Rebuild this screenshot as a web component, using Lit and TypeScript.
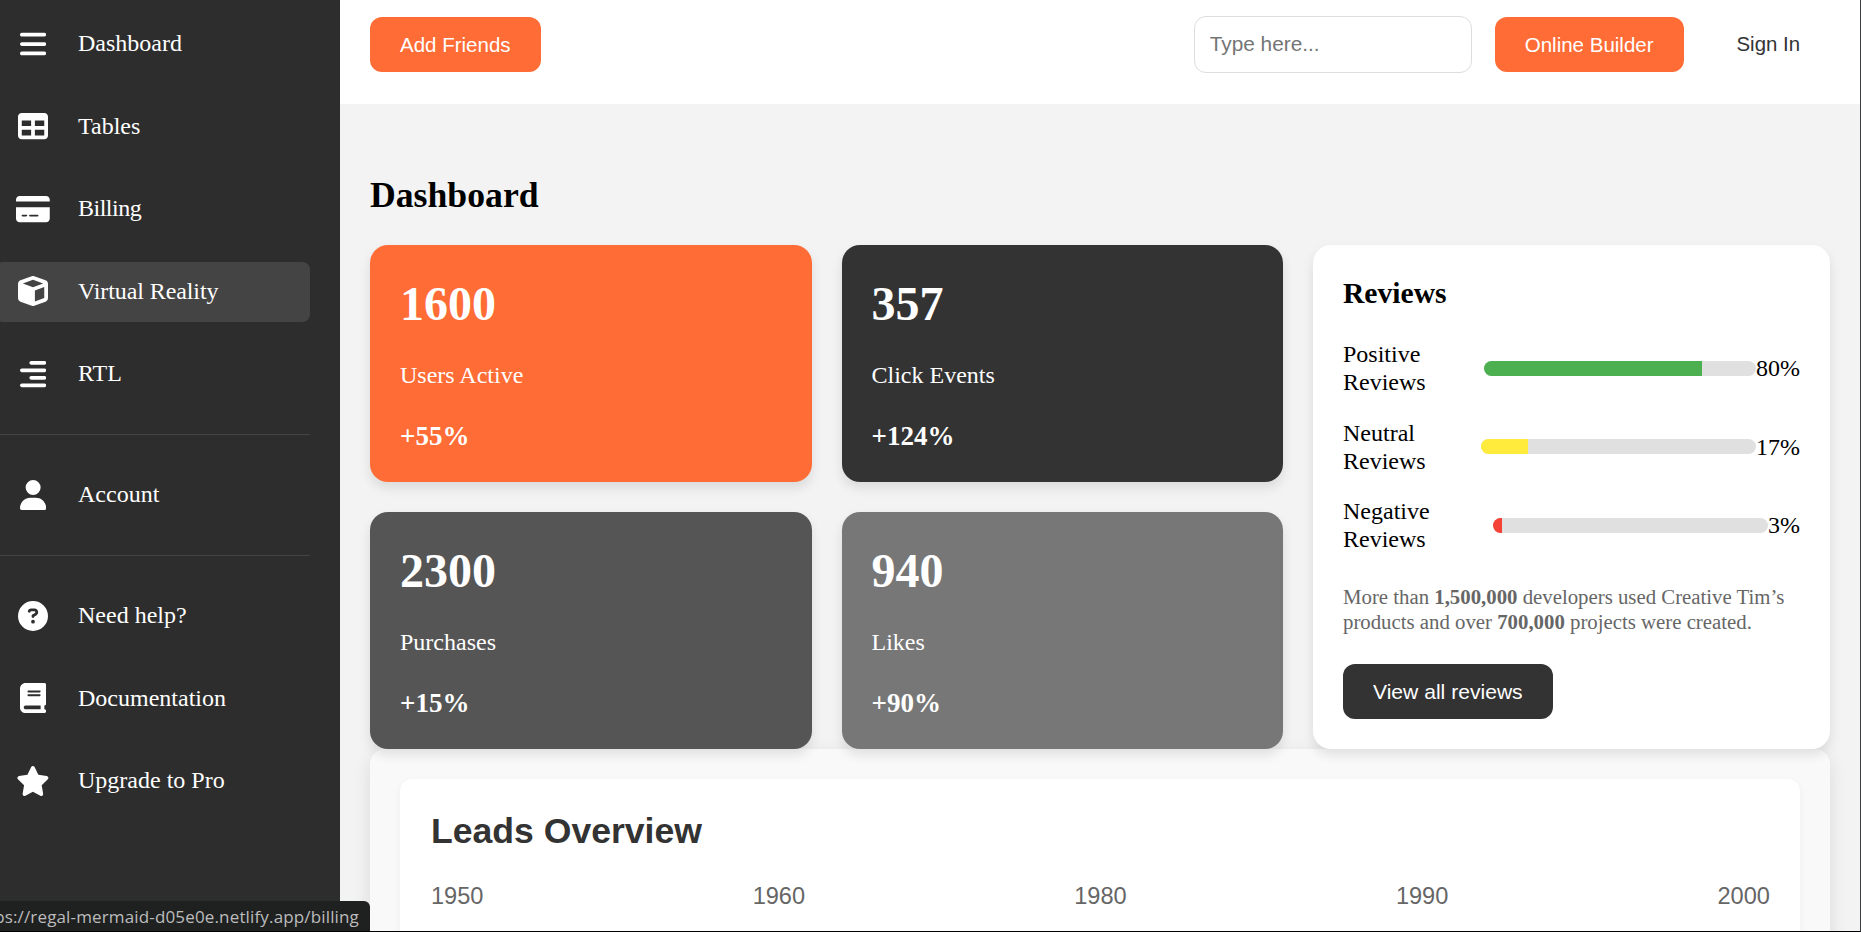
import { LitElement, html, css, svg } from "lit";
import { customElement } from "lit/decorators.js";
import { styleMap } from "lit/directives/style-map.js";
import { classMap } from "lit/directives/class-map.js";

interface Glyph { w: number; d: string }

const glyphs: Record<string, Glyph> = {
  bars: { w: 448, d: "M0 96C0 78.300 14.300 64 32 64H416c17.700 0 32 14.300 32 32s-14.300 32-32 32H32C14.300 128 0 113.700 0 96zM0 256c0-17.700 14.300-32 32-32H416c17.700 0 32 14.300 32 32s-14.300 32-32 32H32c-17.700 0-32-14.300-32-32zM448 416c0 17.700-14.300 32-32 32H32c-17.700 0-32-14.300-32-32s14.300-32 32-32H416c17.700 0 32 14.300 32 32z" },
  table: { w: 512, d: "M0 96C0 60.700 28.700 32 64 32H448c35.300 0 64 28.700 64 64V416c0 35.300-28.700 64-64 64H64c-35.300 0-64-28.700-64-64V96zM64 160v96H224V160H64zm384 0H288v96H448V160zM64 320v96H224V320H64zm384 0H288v96H448V320z" },
  card: { w: 576, d: "M64 32C28.700 32 0 60.700 0 96v32H576V96c0-35.300-28.700-64-64-64H64zM576 224H0V416c0 35.300 28.700 64 64 64H512c35.300 0 64-28.700 64-64V224zM112 352h64c8.800 0 16 7.200 16 16s-7.200 16-16 16H112c-8.800 0-16-7.200-16-16s7.200-16 16-16zm112 16c0-8.800 7.200-16 16-16H368c8.800 0 16 7.200 16 16s-7.200 16-16 16H240c-8.800 0-16-7.200-16-16z" },
  cube: { w: 512, d: "M234.500 5.700c13.900-5 29.100-5 43.100 0l192 68.600C495 83.400 512 107.500 512 134.600V377.400c0 27-17 51.200-42.500 60.300l-192 68.600c-13.900 5-29.100 5-43.100 0l-192-68.600C17 428.600 0 404.500 0 377.400V134.600c0-27 17-51.200 42.500-60.300l192-68.600zM256 66L82.300 128 256 190l173.700-62L256 66zm32 368.600l160-57.100v-188L288 246.600v188z" },
  alignRight: { w: 448, d: "M448 64c0 17.700-14.300 32-32 32H192c-17.700 0-32-14.300-32-32s14.300-32 32-32H416c17.700 0 32 14.300 32 32zm0 256c0 17.700-14.300 32-32 32H192c-17.700 0-32-14.300-32-32s14.300-32 32-32H416c17.700 0 32 14.300 32 32zM0 192c0-17.700 14.300-32 32-32H416c17.700 0 32 14.300 32 32s-14.300 32-32 32H32c-17.700 0-32-14.300-32-32zM448 448c0 17.700-14.300 32-32 32H32c-17.700 0-32-14.300-32-32s14.300-32 32-32H416c17.700 0 32 14.300 32 32z" },
  user: { w: 448, d: "M224 256A128 128 0 1 0 224 0a128 128 0 1 0 0 256zm-45.700 48C79.800 304 0 383.800 0 482.300C0 498.700 13.300 512 29.700 512H418.300c16.400 0 29.700-13.300 29.700-29.700C448 383.800 368.200 304 269.700 304H178.300z" },
  help: { w: 512, d: "M256 512A256 256 0 1 0 256 0a256 256 0 1 0 0 512zM169.800 165.300c7.900-22.300 29.100-37.300 52.800-37.300h58.300c34.900 0 63.100 28.300 63.100 63.100c0 22.600-12.100 43.500-31.700 54.800L280 264.400c-.2 13-10.900 23.600-24 23.600c-13.300 0-24-10.700-24-24V250.500c0-8.600 4.600-16.500 12.100-20.800l44.300-25.400c4.700-2.700 7.600-7.700 7.600-13.100c0-8.400-6.800-15.100-15.100-15.100H222.600c-3.400 0-6.400 2.100-7.500 5.300l-.4 1.200c-4.400 12.500-18.200 19-30.600 14.600s-19-18.200-14.600-30.600l.4-1.200zM224 352a32 32 0 1 1 64 0 32 32 0 1 1-64 0z" },
  book: { w: 448, d: "M96 0C43 0 0 43 0 96V416c0 53 43 96 96 96H384h32c17.700 0 32-14.300 32-32s-14.300-32-32-32V384c17.700 0 32-14.300 32-32V32c0-17.700-14.300-32-32-32H384 96zm0 384H352v64H96c-17.700 0-32-14.300-32-32s14.300-32 32-32zm32-240c0-8.800 7.200-16 16-16H336c8.800 0 16 7.200 16 16s-7.200 16-16 16H144c-8.800 0-16-7.200-16-16zm16 48H336c8.800 0 16 7.200 16 16s-7.200 16-16 16H144c-8.800 0-16-7.200-16-16s7.200-16 16-16z" },
  star: { w: 576, d: "M316.900 18C311.600 7 300.400 0 288.100 0s-23.400 7-28.800 18L195 150.300 51.400 171.500c-12 1.800-22 10.200-25.700 21.700s-.7 24.200 7.900 32.700L137.800 329 113.200 474.700c-2 12 3 24.200 12.900 31.300s23 8 33.800 2.300l128.300-68.500 128.300 68.500c10.800 5.700 23.900 4.900 33.800-2.300s14.900-19.300 12.900-31.300L438.500 329 542.700 225.900c8.600-8.500 11.700-21.200 7.900-32.700s-13.700-19.900-25.700-21.700L381.200 150.300 316.900 18z" },
};

interface NavItem { icon: string; label: string; active?: boolean; tight?: boolean }

const navGroups: NavItem[][] = [
  [
    { icon: "bars", label: "Dashboard" },
    { icon: "table", label: "Tables" },
    { icon: "card", label: "Billing", tight: true },
    { icon: "cube", label: "Virtual Reality", active: true },
    { icon: "alignRight", label: "RTL" },
  ],
  [{ icon: "user", label: "Account" }],
  [
    { icon: "help", label: "Need help?" },
    { icon: "book", label: "Documentation" },
    { icon: "star", label: "Upgrade to Pro" },
  ],
];

const stats = [
  { value: "1600", label: "Users Active", change: "+55%", tone: "orange" },
  { value: "357", label: "Click Events", change: "+124%", tone: "dark" },
  { value: "2300", label: "Purchases", change: "+15%", tone: "mid" },
  { value: "940", label: "Likes", change: "+90%", tone: "light" },
];

const reviews = [
  { label: "Positive Reviews", value: 80, color: "#4caf50" },
  { label: "Neutral Reviews", value: 17, color: "#ffeb3b" },
  { label: "Negative Reviews", value: 3, color: "#f44336" },
];

const years = ["1950", "1960", "1980", "1990", "2000"];

@customElement("side-nav")
export class SideNav extends LitElement {
  static styles = css`
    :host {
      display: block;
      box-sizing: border-box;
      width: 340px;
      flex: none;
      padding: 14px 30px 0 0;
      background: #2d2d2d;
      color: #fff;
      font: 24px/28px "Liberation Serif", serif;
    }
    .group {
      display: flex;
      flex-direction: column;
      gap: 22.5px;
      margin-left: -5px;
    }
    .group + .group {
      margin-top: 30px;
      padding-top: 30px;
      border-top: 1px solid #444;
    }
    .item {
      display: flex;
      align-items: center;
      gap: 30px;
      height: 60px;
      padding-left: 23px;
      border-radius: 7.5px;
    }
    .active { background: #444; }
    .icon {
      display: flex;
      justify-content: center;
      width: 30px;
      height: 30px;
      padding-bottom: 1px;
    }
    .icon svg { flex: none; height: 30px; fill: currentColor; }
    .text { padding-bottom: 2px; }
    .active .text { letter-spacing: -0.1px; }
    .tight .text { letter-spacing: -0.5px; }
  `;

  render() {
    return navGroups.map(
      (group) => html`<nav class="group">
        ${group.map((item) => {
          const g = glyphs[item.icon];
          return html`<div class=${classMap({ item: true, active: !!item.active, tight: !!item.tight })}>
            <span class="icon"><svg viewBox="0 0 ${g.w} 512" width=${(g.w * 30) / 512}>${svg`<path d=${g.d} />`}</svg></span>
            <span class="text">${item.label}</span>
          </div>`;
        })}
      </nav>`
    );
  }
}

@customElement("app-root")
export class AppRoot extends LitElement {
  static styles = css`
    :host {
      display: block;
      position: relative;
      box-sizing: border-box;
      width: 100%;
      height: 932px;
      overflow: hidden;
      background: #f3f3f3;
      border-right: 1px solid #3c3f41;
      border-bottom: 1px solid #000;
      color: #000;
      font: 24px/28px "Liberation Serif", serif;
    }
    .layout { display: flex; height: 100%; }
    .page { flex: 1; min-width: 0; }
    .header {
      display: flex;
      align-items: center;
      justify-content: space-between;
      box-sizing: border-box;
      height: 104px;
      padding: 0 30px 15px;
      background: #fff;
    }
    .tools { display: flex; align-items: center; gap: 23px; }
    .btn {
      display: block;
      box-sizing: border-box;
      height: 55px;
      padding: 0 30px 1px;
      border: 0;
      border-radius: 12px;
      background: #ff6c36;
      color: #fff;
      font: 20.5px/53px "Liberation Sans", sans-serif;
      white-space: nowrap;
    }
    .btn.plain { background: none; color: #333; font-size: 20.4px; }
    .btn.dark { background: #333; font-size: 21.1px; }
    .search {
      box-sizing: border-box;
      width: 278px;
      height: 57px;
      padding: 0 15px 2px;
      border: 1px solid #ddd;
      border-radius: 12px;
      background: #fff;
      font: 20.8px "Liberation Sans", sans-serif;
    }
    .search::placeholder { color: #757575; }
    .main { padding: 0 30px; }
    .title { margin: 0; padding: 70px 0 29px; font-size: 35.7px; line-height: 42px; font-weight: bold; }
    .overview {
      position: relative;
      z-index: 1;
      display: grid;
      grid-template-columns: 441.5px 441.5px 1fr;
      grid-template-rows: 237px 237px;
      gap: 30px;
    }
    .card {
      box-sizing: border-box;
      padding: 30px;
      border-radius: 18px;
      box-shadow: 0 6px 12px rgba(0, 0, 0, 0.1);
      color: #fff;
    }
    .orange { background: #ff6c36; }
    .dark { background: #333; }
    .mid { background: #555; }
    .light { background: #777; }
    .value { padding-top: 1px; font-size: 48px; line-height: 55px; font-weight: bold; }
    .label { margin: 30px 0 32px; }
    .change { font-size: 27px; line-height: 31px; font-weight: bold; }
    .reviews {
      grid-column: 3;
      grid-row: 1 / span 2;
      background: #fff;
      color: #000;
    }
    .reviews h3 { margin: 0 0 29px; font-size: 29.6px; line-height: 36px; }
    .review { display: flex; align-items: center; justify-content: space-between; margin-bottom: 22.5px; }
    .track {
      width: 70%;
      height: 15px;
      overflow: hidden;
      border-radius: 7.5px;
      background: #e0e0e0;
    }
    .fill { height: 100%; }
    .note { margin: 31px 0 30px; color: #666; font-size: 20.8px; line-height: 25px; }
    .panel {
      padding: 30px;
      border-radius: 15px;
      background: #f9f9f9;
      box-shadow: 0 6px 18px rgba(0, 0, 0, 0.1);
    }
    .leads {
      height: 300px;
      padding: 31px 30px 30px;
      border-radius: 12px;
      background: #fff;
      box-shadow: 0 3px 9px rgba(0, 0, 0, 0.05);
      font-family: "Liberation Sans", sans-serif;
    }
    .leads h2 { margin: 0 0 30px; padding-left: 1px; color: #333; font-size: 35.6px; line-height: 42px; }
    .years { display: flex; justify-content: space-between; padding-left: 1px; color: #666; font-size: 23.6px; }
    .status {
      position: absolute;
      left: 0;
      bottom: -1px;
      z-index: 2;
      display: flex;
      justify-content: flex-end;
      box-sizing: border-box;
      width: 370px;
      height: 31px;
      padding-right: 11px;
      overflow: hidden;
      border-top-right-radius: 6px;
      background: #1f2121;
      color: #bcbcbc;
      font: 17px/31px "Open Sans", sans-serif;
      letter-spacing: 0.15px;
      white-space: nowrap;
    }
  `;

  render() {
    return html`
      <div class="layout">
        <side-nav></side-nav>
        <div class="page">
          <header class="header">
            <button class="btn">Add Friends</button>
            <div class="tools">
              <input class="search" placeholder="Type here..." />
              <button class="btn">Online Builder</button>
              <button class="btn plain">Sign In</button>
            </div>
          </header>
          <main class="main">
            <h2 class="title">Dashboard</h2>
            <section class="overview">
              ${stats.map(
                (s) => html`<div class="card ${s.tone}">
                  <div class="value">${s.value}</div>
                  <div class="label">${s.label}</div>
                  <div class="change">${s.change}</div>
                </div>`
              )}
              <div class="card reviews">
                <h3>Reviews</h3>
                ${reviews.map(
                  (r) => html`<div class="review">
                    <span>${r.label}</span>
                    <div class="track">
                      <div class="fill" style=${styleMap({ width: `${r.value}%`, background: r.color })}></div>
                    </div>
                    <span>${r.value}%</span>
                  </div>`
                )}
                <p class="note">More than <b>1,500,000</b> developers used Creative Tim’s products and over <b>700,000</b> projects were created.</p>
                <button class="btn dark">View all reviews</button>
              </div>
            </section>
            <section class="panel">
              <div class="leads">
                <h2>Leads Overview</h2>
                <div class="years">${years.map((y) => html`<span>${y}</span>`)}</div>
              </div>
            </section>
          </main>
        </div>
      </div>
      <div class="status">https://regal-mermaid-d05e0e.netlify.app/billing</div>
    `;
  }
}
